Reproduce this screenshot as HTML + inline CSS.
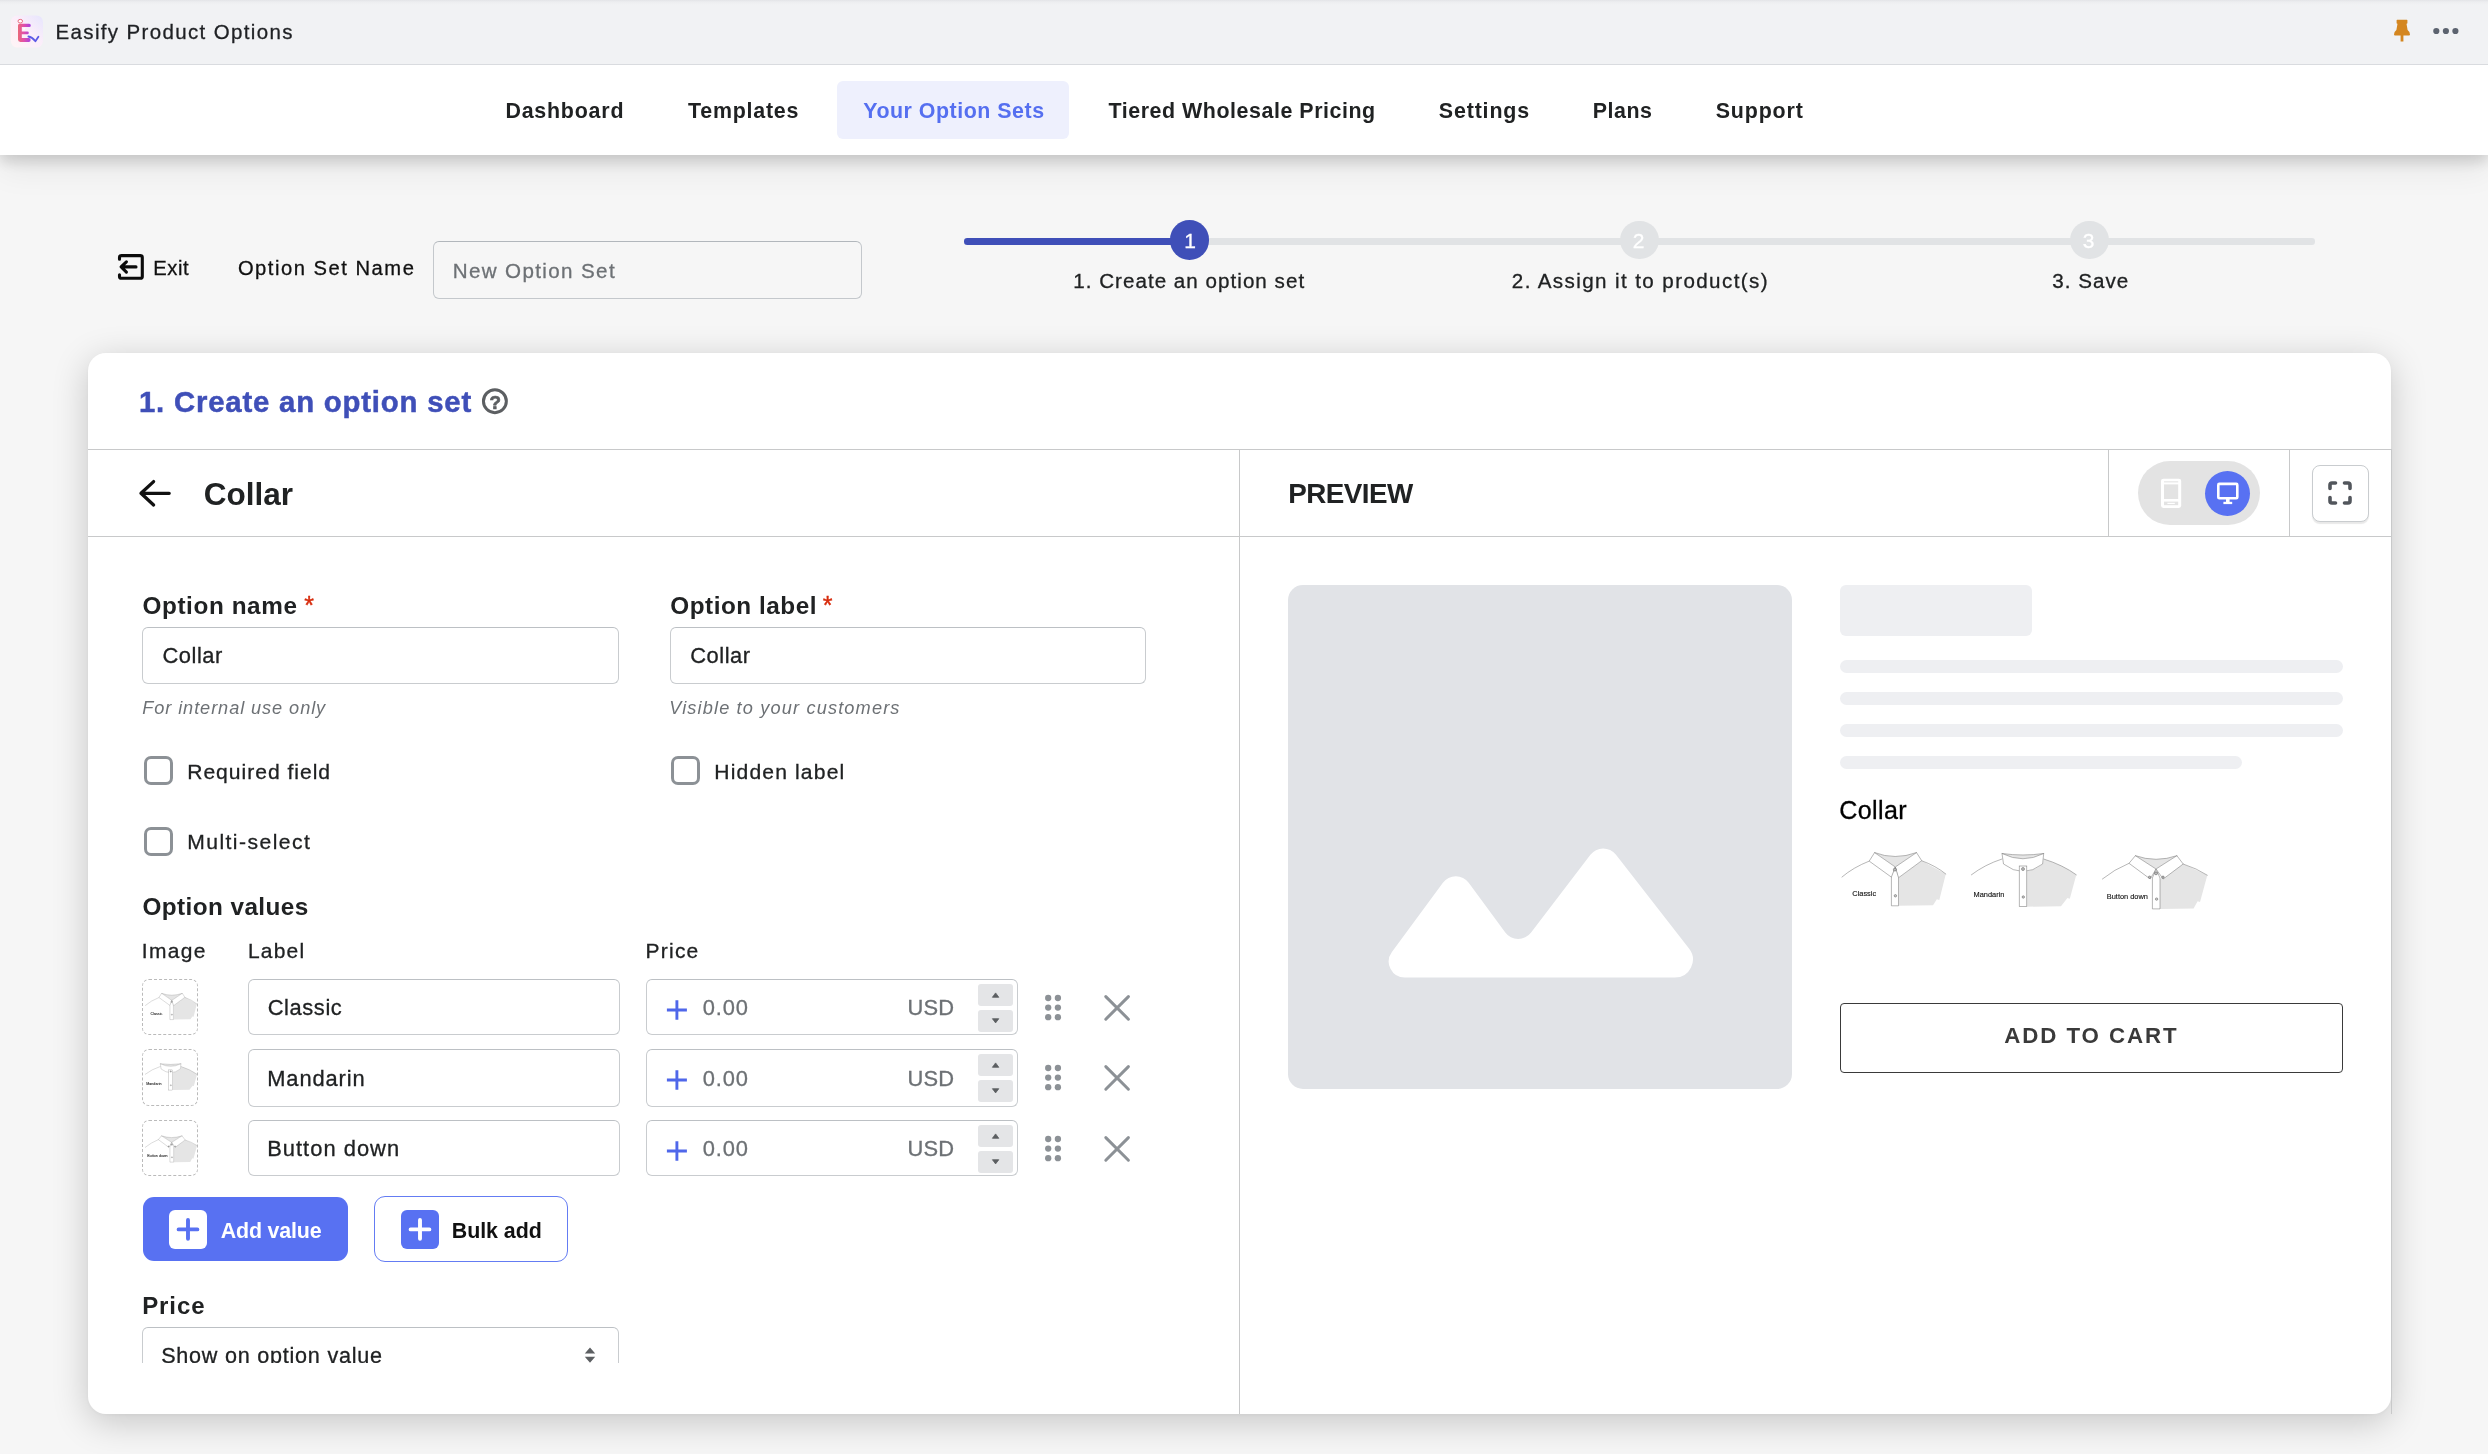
<!DOCTYPE html>
<html lang="en">
<head>
<meta charset="utf-8">
<title>Easify Product Options</title>
<style>
*{box-sizing:border-box}
html,body{margin:0;padding:0}
body{width:2488px;height:1454px;overflow:hidden;background:#f6f6f6;position:relative;font-family:"Liberation Sans",sans-serif}
.a{position:absolute}
.t{position:absolute;white-space:nowrap;line-height:1;font-family:"Liberation Sans",sans-serif}
#topbar{left:0;top:0;width:2488px;height:65px;background:linear-gradient(#e3e4e7 0,#edeef0 2px,#f1f2f4 5px);border-bottom:1px solid #d9dbdf}
#nav{left:0;top:65px;width:2488px;height:90px;background:#fff;box-shadow:0 6px 14px rgba(0,0,0,.16),0 14px 34px rgba(0,0,0,.07);clip-path:inset(0 0 -80px 0)}
#pill{left:837px;top:81px;width:232px;height:58px;border-radius:6px;background:#eef0fd}
#card{left:88px;top:353px;width:2303px;height:1061px;border-radius:18px;background:#fff;box-shadow:0 8px 36px rgba(0,0,0,.2),0 1px 4px rgba(0,0,0,.04)}
.hl{height:1px;background:#c8c9ca}
.vl{width:1px;background:#c8c9ca}
.inp{border:1px solid #c9cccf;border-top-color:#bcc0c4;border-radius:6px;background:#fff}
.cb{width:28.5px;height:28.5px;border:3px solid #8c9196;border-radius:7px;background:#fff}
.thumb{width:55.5px;height:55.5px;border:1px dashed #bababa;border-radius:7px;background:#fff}
.spin{left:978px;width:35px;background:#e4e5e7;border-radius:3px}
.sk{background:#eeeff2}
</style>
</head>
<body>
<div id="root" class="a" style="left:0;top:0;width:2488px;height:1454px;will-change:transform">
<!-- top bar -->
<div id="topbar" class="a"></div>
<svg class="a" style="left:10px;top:14px" width="34" height="35" viewBox="10 14 34 35">
  <defs>
    <linearGradient id="lg1" x1="0" y1="1" x2="1" y2="0"><stop offset="0" stop-color="#fff4f5"/><stop offset=".55" stop-color="#fbeefa"/><stop offset="1" stop-color="#e6e5fd"/></linearGradient>
    <linearGradient id="lg2" x1="0" y1="0" x2="1" y2="0"><stop offset="0" stop-color="#ea6878"/><stop offset=".45" stop-color="#e24fa8"/><stop offset="1" stop-color="#a542e4"/></linearGradient>
  </defs>
  <rect x="10.8" y="15.4" width="32.2" height="32.2" rx="6.5" fill="url(#lg1)"/>
  <path d="M18 25.4 Q18 23.8 19.6 23.8 L29.2 23.8 Q30.8 23.8 30.8 25.4 Q30.8 27 29.2 27 L21.8 27 L21.8 31.4 L27.4 31.4 Q28.8 31.4 28.8 32.8 Q28.8 34.3 27.4 34.3 L21.8 34.3 L21.8 38 L28.8 38 Q30.6 38 30.6 40 Q30.6 42 28.8 42 L20.4 42 Q18 42 18 39.6 Z" fill="url(#lg2)"/>
  <ellipse cx="20.3" cy="21.2" rx="2.3" ry="1.8" fill="#fff" stroke="#ea6a80" stroke-width="1"/>
  <path d="M22.5 28.6 L25.8 27.4 L24 30.6 Z" fill="#fff" opacity=".85"/>
  <path d="M28.4 36.5 Q32 37 35.4 41.2 L38.4 36.8" fill="none" stroke="#5d5ae6" stroke-width="1.8" stroke-linecap="round" stroke-linejoin="round"/>
</svg>
<svg class="a" style="left:2392px;top:18px" width="20" height="26" viewBox="0 0 20 26">
  <path d="M4.6 2.3 Q4.6 1.8 5.2 1.8 L14.8 1.8 Q15.4 1.8 15.4 2.3 L15.4 5 Q15.4 5.6 14.8 5.7 L14.5 5.8 L15.6 12 Q18 13.6 18 16.6 Q18 17.6 17 17.6 L11.4 17.6 L11.4 23.4 L8.6 23.4 L8.6 17.6 L3 17.6 Q2 17.6 2 16.6 Q2 13.6 4.4 12 L5.5 5.8 L5.2 5.7 Q4.6 5.6 4.6 5 Z" fill="#d4861f"/>
</svg>
<svg class="a" style="left:2430px;top:26px" width="32" height="10" viewBox="0 0 32 10"><circle cx="6.3" cy="5" r="3.1" fill="#5c636f"/><circle cx="15.9" cy="5" r="3.1" fill="#5c636f"/><circle cx="25.4" cy="5" r="3.1" fill="#5c636f"/></svg>

<!-- nav -->
<div id="nav" class="a"></div>
<div id="pill" class="a"></div>

<!-- exit row -->
<svg class="a" style="left:114px;top:250px" width="34" height="34" viewBox="114 250 34 34" fill="none" stroke="#0b0b0b" stroke-width="3.1" stroke-linecap="round" stroke-linejoin="round">
  <path d="M119.5 259.3 L119.5 257.5 Q119.5 255.6 121.4 255.6 L140.4 255.6 Q142.3 255.6 142.3 257.5 L142.3 276.4 Q142.3 278.3 140.4 278.3 L121.4 278.3 Q119.5 278.3 119.5 276.4 L119.5 274.7"/>
  <path d="M136 266.9 L121.3 266.9 M126.4 261.8 L121.1 266.9 L126.4 272.1"/>
</svg>
<div class="a inp" style="left:433px;top:241px;width:429px;height:57.5px;background:#f6f6f6;border-color:#c4c8cc;border-top-color:#b2b7bc"></div>

<!-- stepper -->
<div class="a" style="left:1189px;top:238.3px;width:1126px;height:6.4px;border-radius:3.2px;background:#e1e3e5"></div>
<div class="a" style="left:964px;top:238px;width:226px;height:6.6px;border-radius:3.3px;background:#3f4fb8"></div>
<div class="a" style="left:1169.7px;top:220.4px;width:39.4px;height:39.4px;border-radius:50%;background:#3f4fb8"></div>
<div class="a" style="left:1620.3px;top:220.6px;width:38.8px;height:38.8px;border-radius:50%;background:#e1e3e5"></div>
<div class="a" style="left:2070.3px;top:220.6px;width:38.8px;height:38.8px;border-radius:50%;background:#e1e3e5"></div>

<!-- card -->
<div id="card" class="a"></div>
<div class="a hl" style="left:88px;top:449px;width:2304px"></div>
<div class="a hl" style="left:88px;top:536px;width:2304px"></div>
<div class="a vl" style="left:1239px;top:449px;height:965px"></div>
<div class="a vl" style="left:2108px;top:449px;height:88px"></div>
<div class="a vl" style="left:2289px;top:449px;height:88px"></div>
<div class="a vl" style="left:2391px;top:449px;height:965px"></div>

<!-- help icon -->
<svg class="a" style="left:480px;top:386px" width="30" height="30" viewBox="480 386 30 30"><circle cx="494.9" cy="401.2" r="11.45" fill="none" stroke="#5c5f62" stroke-width="3"/></svg>
<!-- back arrow -->
<svg class="a" style="left:134px;top:476px" width="42" height="36" viewBox="134 476 42 36" fill="none" stroke="#111" stroke-width="3.3" stroke-linecap="round" stroke-linejoin="round">
  <path d="M169.2 493.3 L141.3 493.3 M153.6 481.6 L141 493.3 L153.6 505"/>
</svg>

<!-- preview toggle -->
<div class="a" style="left:2138px;top:461.2px;width:122px;height:64px;border-radius:32px;background:#e3e3e3"></div>
<div class="a" style="left:2205px;top:471.2px;width:45px;height:45px;border-radius:50%;background:#5871f2"></div>
<svg class="a" style="left:2158px;top:476px" width="26" height="34" viewBox="2158 476 26 34">
  <rect x="2161" y="478.7" width="20.2" height="29.2" rx="2.4" fill="#fff"/>
  <rect x="2164" y="484.4" width="14.2" height="14.6" fill="#e3e3e3"/>
  <rect x="2164" y="481.3" width="14.2" height="1.1" fill="#e3e3e3"/>
  <rect x="2164" y="501.6" width="14.2" height="3.6" fill="#e3e3e3"/>
  <rect x="2167.4" y="502.8" width="7.4" height="1.2" fill="#fff"/>
</svg>
<svg class="a" style="left:2214px;top:480px" width="28" height="28" viewBox="2214 480 28 28">
  <rect x="2218.3" y="483.9" width="19" height="14.4" rx="1" fill="none" stroke="#fff" stroke-width="2.6"/>
  <rect x="2226" y="499" width="3.6" height="3.4" fill="#fff"/>
  <rect x="2223.4" y="501.8" width="8.8" height="2.3" fill="#fff"/>
</svg>
<div class="a" style="left:2312.3px;top:464.6px;width:56.4px;height:57px;border-radius:8px;border:1.3px solid #c9cccf;background:#fff;box-shadow:0 1.5px 1px rgba(0,0,0,.09)"></div>
<svg class="a" style="left:2324px;top:477px" width="32" height="32" viewBox="2324 477 32 32" fill="none" stroke="#52565c" stroke-width="3.6" stroke-linecap="round" stroke-linejoin="round">
  <path d="M2330 488.5 L2330 485 Q2330 483 2332 483 L2335.5 483 M2344.5 483 L2348 483 Q2350 483 2350 485 L2350 488.5 M2350 497.5 L2350 501 Q2350 503 2348 503 L2344.5 503 M2335.5 503 L2332 503 Q2330 503 2330 501 L2330 497.5"/>
</svg>

<!-- LEFT FORM -->
<div class="a inp" style="left:142px;top:627px;width:477px;height:56.8px"></div>
<div class="a inp" style="left:670px;top:627px;width:476px;height:56.8px"></div>
<span class="t" style="left:304.2px;top:593.4px;font-size:25px;font-weight:400;color:#d72c0d;-webkit-text-stroke:0.4px">*</span>
<span class="t" style="left:822.7px;top:593.4px;font-size:25px;font-weight:400;color:#d72c0d;-webkit-text-stroke:0.4px">*</span>
<div class="a cb" style="left:144.2px;top:756.1px"></div>
<div class="a cb" style="left:671.3px;top:756.1px"></div>
<div class="a cb" style="left:144.2px;top:827.3px"></div>

<div class="a thumb" style="left:142.3px;top:979.2px;height:55.5px"></div>
<svg class="a" style="left:144.5px;top:993.2px" width="52.4" height="28.7" viewBox="0 0 106 58"><path d="M57.5 26 L80.7 8.7 L104.8 22 L98.3 48 L95.8 47.3 L92 53.2 L57.5 53.8 Z" fill="#e5e5e5"/>
<path d="M33.6 0.6 Q54 8.5 75.5 0.6 L54.3 15 Z" fill="#e5e5e5"/>
<path d="M1 25 Q12 15.5 28.2 9.1" fill="none" stroke="#7a7a7a" stroke-width="0.55" stroke-linejoin="round" stroke-linecap="round"/>
<path d="M80.7 8.7 Q95 14 104.8 22" fill="none" stroke="#7a7a7a" stroke-width="0.55" stroke-linejoin="round" stroke-linecap="round"/>
<path d="M33.6 0.6 L28.2 9.1 L51 25.6 L54.3 15 Z" fill="#fff" stroke="#7a7a7a" stroke-width="0.55" stroke-linejoin="round"/>
<path d="M75.5 0.6 L80.7 8.7 L57.2 26 L54.3 15 Z" fill="#fff" stroke="#7a7a7a" stroke-width="0.55" stroke-linejoin="round"/>
<path d="M33.6 0.6 Q54 8.5 75.5 0.6" fill="none" stroke="#7a7a7a" stroke-width="0.55" stroke-linejoin="round" stroke-linecap="round"/>
<path d="M50.4 25 L50.4 53.8 L57.5 53.8 L57.5 25.6 L54.3 15 Z" fill="#fff" stroke="#7a7a7a" stroke-width="0.55" stroke-linejoin="round"/>
<circle cx="53.9" cy="17.6" r="1.5" fill="#bbb" stroke="#555" stroke-width="0.5"/>
<circle cx="54.4" cy="43.8" r="1.2" fill="#ccc" stroke="#555" stroke-width="0.5"/>
<text x="11.3" y="43.9" font-size="7.4" font-family="Liberation Sans, sans-serif" fill="#111" stroke="#111" stroke-width="0.12">Classic</text></svg>
<div class="a inp" style="left:248.3px;top:979.2px;width:371.4px;height:56.3px"></div>
<div class="a inp" style="left:646.2px;top:979.2px;width:371.6px;height:56.3px"></div>
<svg class="a" style="left:664px;top:997.0px" width="26" height="26" viewBox="0 0 26 26" fill="none" stroke="#4f67ea" stroke-width="2.9"><path d="M2.9 13 L22.9 13 M12.9 3.3 L12.9 22.7"/></svg>
<div class="a spin" style="top:983.8px;height:22px"></div>
<div class="a spin" style="top:1010.1px;height:21.9px"></div>
<svg class="a" style="left:990px;top:991.2px" width="12" height="34" viewBox="0 0 12 34"><path d="M2.4 6.3 L5.6 1.9 L8.8 6.3 Z M2.4 27.7 L5.6 31.9 L8.8 27.7 Z" fill="#5c5f62" stroke="#5c5f62" stroke-width="0.8" stroke-linejoin="round"/></svg>
<svg class="a" style="left:1044px;top:994.3px" width="18" height="28" viewBox="0 0 18 28" fill="#8c9196"><circle cx="4.2" cy="4" r="3.15"/><circle cx="4.2" cy="13.6" r="3.15"/><circle cx="4.2" cy="23.2" r="3.15"/><circle cx="13.9" cy="4" r="3.15"/><circle cx="13.9" cy="13.6" r="3.15"/><circle cx="13.9" cy="23.2" r="3.15"/></svg>
<svg class="a" style="left:1102px;top:993.2px" width="30" height="30" viewBox="0 0 30 30" fill="none" stroke="#8c9196" stroke-width="3" stroke-linecap="round"><path d="M3.8 3.6 L26.4 26.2 M26.4 3.6 L3.8 26.2"/></svg>
<div class="a thumb" style="left:142.3px;top:1049.1px;height:57.2px"></div>
<svg class="a" style="left:144.5px;top:1063.1px" width="52.4" height="28.7" viewBox="0 0 106 58"><path d="M55.8 19 Q64 18 71.6 12 L72.7 7 Q92 13 105.3 22.8 L98.8 46.7 L96.4 46 L90 54.3 L55.8 54.7 Z" fill="#e5e5e5"/>
<path d="M31 1.5 Q52 4.5 72.7 1.5 Q52 12 31 1.5 Z" fill="#e5e5e5"/>
<path d="M0.4 22.8 Q14 12.5 31 7" fill="none" stroke="#7a7a7a" stroke-width="0.55" stroke-linejoin="round" stroke-linecap="round"/>
<path d="M72.7 7 Q92 13 105.3 22.8" fill="none" stroke="#7a7a7a" stroke-width="0.55" stroke-linejoin="round" stroke-linecap="round"/>
<path d="M31 1.5 Q52 12 72.7 1.5 L71.6 12 Q52 27 32.5 12 Z" fill="#fff" stroke="#7a7a7a" stroke-width="0.55" stroke-linejoin="round"/>
<path d="M31 1.5 Q52 4.5 72.7 1.5" fill="none" stroke="#7a7a7a" stroke-width="0.55" stroke-linejoin="round" stroke-linecap="round"/>
<rect x="48.2" y="14" width="7.6" height="40.7" fill="#fff" stroke="#7a7a7a" stroke-width="0.55"/>
<circle cx="52" cy="17" r="1.5" fill="#bbb" stroke="#555" stroke-width="0.5"/>
<circle cx="52.3" cy="45" r="1.2" fill="#ccc" stroke="#555" stroke-width="0.5"/>
<text x="2.6" y="44.5" font-size="7.4" font-family="Liberation Sans, sans-serif" fill="#111" stroke="#111" stroke-width="0.12">Mandarin</text></svg>
<div class="a inp" style="left:248.3px;top:1049.1px;width:371.4px;height:58px"></div>
<div class="a inp" style="left:646.2px;top:1049.1px;width:371.6px;height:58px"></div>
<svg class="a" style="left:664px;top:1066.9px" width="26" height="26" viewBox="0 0 26 26" fill="none" stroke="#4f67ea" stroke-width="2.9"><path d="M2.9 13 L22.9 13 M12.9 3.3 L12.9 22.7"/></svg>
<div class="a spin" style="top:1053.7px;height:22px"></div>
<div class="a spin" style="top:1080.0px;height:21.9px"></div>
<svg class="a" style="left:990px;top:1061.1px" width="12" height="34" viewBox="0 0 12 34"><path d="M2.4 6.3 L5.6 1.9 L8.8 6.3 Z M2.4 27.7 L5.6 31.9 L8.8 27.7 Z" fill="#5c5f62" stroke="#5c5f62" stroke-width="0.8" stroke-linejoin="round"/></svg>
<svg class="a" style="left:1044px;top:1064.2px" width="18" height="28" viewBox="0 0 18 28" fill="#8c9196"><circle cx="4.2" cy="4" r="3.15"/><circle cx="4.2" cy="13.6" r="3.15"/><circle cx="4.2" cy="23.2" r="3.15"/><circle cx="13.9" cy="4" r="3.15"/><circle cx="13.9" cy="13.6" r="3.15"/><circle cx="13.9" cy="23.2" r="3.15"/></svg>
<svg class="a" style="left:1102px;top:1063.1px" width="30" height="30" viewBox="0 0 30 30" fill="none" stroke="#8c9196" stroke-width="3" stroke-linecap="round"><path d="M3.8 3.6 L26.4 26.2 M26.4 3.6 L3.8 26.2"/></svg>
<div class="a thumb" style="left:142.3px;top:1120.1px;height:55.6px"></div>
<svg class="a" style="left:144.5px;top:1134.1px" width="52.4" height="28.7" viewBox="0 0 106 58"><path d="M58 27 L81.2 12 L105.3 23.2 L98 50 L95.6 49.2 L91.6 56.4 L58 56.9 Z" fill="#e5e5e5"/>
<path d="M33.4 3.7 Q54 11 74.9 3.7 L54 17 Z" fill="#e5e5e5"/>
<path d="M0.4 27 Q12 17.5 27 11.3" fill="none" stroke="#7a7a7a" stroke-width="0.55" stroke-linejoin="round" stroke-linecap="round"/>
<path d="M81.2 12 Q95 16.5 105.3 23.2" fill="none" stroke="#7a7a7a" stroke-width="0.55" stroke-linejoin="round" stroke-linecap="round"/>
<path d="M33.4 3.7 L27 11.3 L48.2 27 L54 17 Z" fill="#fff" stroke="#7a7a7a" stroke-width="0.55" stroke-linejoin="round"/>
<path d="M74.9 3.7 L81.2 12 L61.2 27 L54 17 Z" fill="#fff" stroke="#7a7a7a" stroke-width="0.55" stroke-linejoin="round"/>
<path d="M33.4 3.7 Q54 11 74.9 3.7" fill="none" stroke="#7a7a7a" stroke-width="0.55" stroke-linejoin="round" stroke-linecap="round"/>
<path d="M50.4 26 L50.4 56.9 L58 56.9 L58 26 L54 17 Z" fill="#fff" stroke="#7a7a7a" stroke-width="0.55" stroke-linejoin="round"/>
<circle cx="54" cy="21.3" r="1.5" fill="#bbb" stroke="#555" stroke-width="0.5"/>
<circle cx="47.6" cy="25.2" r="1.2" fill="#bbb" stroke="#555" stroke-width="0.5"/>
<circle cx="61" cy="25.2" r="1.2" fill="#bbb" stroke="#555" stroke-width="0.5"/>
<circle cx="54.6" cy="47.1" r="1.2" fill="#ccc" stroke="#555" stroke-width="0.5"/>
<text x="4.8" y="46.7" font-size="7.4" font-family="Liberation Sans, sans-serif" fill="#111" stroke="#111" stroke-width="0.12">Button down</text></svg>
<div class="a inp" style="left:248.3px;top:1120.1px;width:371.4px;height:56.4px"></div>
<div class="a inp" style="left:646.2px;top:1120.1px;width:371.6px;height:56.4px"></div>
<svg class="a" style="left:664px;top:1137.9px" width="26" height="26" viewBox="0 0 26 26" fill="none" stroke="#4f67ea" stroke-width="2.9"><path d="M2.9 13 L22.9 13 M12.9 3.3 L12.9 22.7"/></svg>
<div class="a spin" style="top:1124.7px;height:22px"></div>
<div class="a spin" style="top:1151.0px;height:21.9px"></div>
<svg class="a" style="left:990px;top:1132.1px" width="12" height="34" viewBox="0 0 12 34"><path d="M2.4 6.3 L5.6 1.9 L8.8 6.3 Z M2.4 27.7 L5.6 31.9 L8.8 27.7 Z" fill="#5c5f62" stroke="#5c5f62" stroke-width="0.8" stroke-linejoin="round"/></svg>
<svg class="a" style="left:1044px;top:1135.2px" width="18" height="28" viewBox="0 0 18 28" fill="#8c9196"><circle cx="4.2" cy="4" r="3.15"/><circle cx="4.2" cy="13.6" r="3.15"/><circle cx="4.2" cy="23.2" r="3.15"/><circle cx="13.9" cy="4" r="3.15"/><circle cx="13.9" cy="13.6" r="3.15"/><circle cx="13.9" cy="23.2" r="3.15"/></svg>
<svg class="a" style="left:1102px;top:1134.1px" width="30" height="30" viewBox="0 0 30 30" fill="none" stroke="#8c9196" stroke-width="3" stroke-linecap="round"><path d="M3.8 3.6 L26.4 26.2 M26.4 3.6 L3.8 26.2"/></svg>

<!-- buttons -->
<div class="a" style="left:142.5px;top:1196.6px;width:205px;height:64.8px;border-radius:11px;background:#5871f2"></div>
<div class="a" style="left:168.8px;top:1210.1px;width:38.2px;height:38.8px;border-radius:6px;background:#fff"></div>
<svg class="a" style="left:168.8px;top:1210.1px" width="38.2" height="38.8" viewBox="0 0 38.2 38.8" fill="none" stroke="#5871f2" stroke-width="3.9" stroke-linecap="round"><path d="M9.6 19.4 L28.4 19.4 M19 10 L19 28.8"/></svg>
<div class="a" style="left:373.8px;top:1196px;width:194.3px;height:65.8px;border-radius:11px;background:#fff;border:1px solid #647cf3"></div>
<div class="a" style="left:400.7px;top:1210.1px;width:38.2px;height:38.8px;border-radius:6px;background:#5871f2"></div>
<svg class="a" style="left:400.7px;top:1210.1px" width="38.2" height="38.8" viewBox="0 0 38.2 38.8" fill="none" stroke="#fff" stroke-width="3.9" stroke-linecap="round"><path d="M9.6 19.4 L28.4 19.4 M19 10 L19 28.8"/></svg>

<!-- select (clipped) -->
<div class="a" style="left:140px;top:1320px;width:482px;height:43px;overflow:hidden">
  <div class="a inp" style="left:2px;top:6.5px;width:477px;height:57px"></div>
  <svg class="a" style="left:443px;top:26px" width="14" height="18" viewBox="0 0 14 18"><path d="M1.8 7.4 L7 1.4 L12.2 7.4 Z M1.8 10.8 L7 16.8 L12.2 10.8 Z" fill="#5c5f62"/></svg>
  <div class="a" style="left:-140px;top:-1320px;width:0;height:0"><span class="t" style="left:161.2px;top:1344.6px;font-size:21.58px;font-weight:400;color:#202223;font-style:normal;letter-spacing:0.763px;-webkit-text-stroke:0.30px;">Show on option value</span></div>
</div>

<!-- PREVIEW -->
<div class="a" style="left:1288px;top:585px;width:504px;height:504px;border-radius:15px;background:#e1e3e7"></div>
<svg class="a" style="left:1380px;top:840px" width="320" height="145" viewBox="1380 840 320 145">
  <path d="M1404.8 977.6 A16 16 0 0 1 1391.9 952.1 L1442.9 882.8 A16 16 0 0 1 1468.7 882.8 L1505.3 932.4 A16 16 0 0 0 1530.9 932.7 L1590.4 854.8 A16 16 0 0 1 1615.8 854.6 L1689.0 948.5 A18 18 0 0 1 1674.8 977.6 Z" fill="#fff"/>
</svg>
<div class="a sk" style="left:1840px;top:585px;width:192px;height:50.5px;border-radius:6px"></div>
<div class="a sk" style="left:1840px;top:660px;width:503px;height:13px;border-radius:6.5px"></div>
<div class="a sk" style="left:1840px;top:692px;width:503px;height:13px;border-radius:6.5px"></div>
<div class="a sk" style="left:1840px;top:724px;width:503px;height:13px;border-radius:6.5px"></div>
<div class="a sk" style="left:1840px;top:756px;width:402px;height:13px;border-radius:6.5px"></div>
<svg class="a" style="left:1840.6px;top:851.6px" width="106" height="58" viewBox="0 0 106 58"><path d="M57.5 26 L80.7 8.7 L104.8 22 L98.3 48 L95.8 47.3 L92 53.2 L57.5 53.8 Z" fill="#e5e5e5"/>
<path d="M33.6 0.6 Q54 8.5 75.5 0.6 L54.3 15 Z" fill="#e5e5e5"/>
<path d="M1 25 Q12 15.5 28.2 9.1" fill="none" stroke="#7a7a7a" stroke-width="0.55" stroke-linejoin="round" stroke-linecap="round"/>
<path d="M80.7 8.7 Q95 14 104.8 22" fill="none" stroke="#7a7a7a" stroke-width="0.55" stroke-linejoin="round" stroke-linecap="round"/>
<path d="M33.6 0.6 L28.2 9.1 L51 25.6 L54.3 15 Z" fill="#fff" stroke="#7a7a7a" stroke-width="0.55" stroke-linejoin="round"/>
<path d="M75.5 0.6 L80.7 8.7 L57.2 26 L54.3 15 Z" fill="#fff" stroke="#7a7a7a" stroke-width="0.55" stroke-linejoin="round"/>
<path d="M33.6 0.6 Q54 8.5 75.5 0.6" fill="none" stroke="#7a7a7a" stroke-width="0.55" stroke-linejoin="round" stroke-linecap="round"/>
<path d="M50.4 25 L50.4 53.8 L57.5 53.8 L57.5 25.6 L54.3 15 Z" fill="#fff" stroke="#7a7a7a" stroke-width="0.55" stroke-linejoin="round"/>
<circle cx="53.9" cy="17.6" r="1.5" fill="#bbb" stroke="#555" stroke-width="0.5"/>
<circle cx="54.4" cy="43.8" r="1.2" fill="#ccc" stroke="#555" stroke-width="0.5"/>
<text x="11.3" y="43.9" font-size="7.4" font-family="Liberation Sans, sans-serif" fill="#111" stroke="#111" stroke-width="0.12">Classic</text></svg>
<svg class="a" style="left:1970.9px;top:851.6px" width="106" height="58" viewBox="0 0 106 58"><path d="M55.8 19 Q64 18 71.6 12 L72.7 7 Q92 13 105.3 22.8 L98.8 46.7 L96.4 46 L90 54.3 L55.8 54.7 Z" fill="#e5e5e5"/>
<path d="M31 1.5 Q52 4.5 72.7 1.5 Q52 12 31 1.5 Z" fill="#e5e5e5"/>
<path d="M0.4 22.8 Q14 12.5 31 7" fill="none" stroke="#7a7a7a" stroke-width="0.55" stroke-linejoin="round" stroke-linecap="round"/>
<path d="M72.7 7 Q92 13 105.3 22.8" fill="none" stroke="#7a7a7a" stroke-width="0.55" stroke-linejoin="round" stroke-linecap="round"/>
<path d="M31 1.5 Q52 12 72.7 1.5 L71.6 12 Q52 27 32.5 12 Z" fill="#fff" stroke="#7a7a7a" stroke-width="0.55" stroke-linejoin="round"/>
<path d="M31 1.5 Q52 4.5 72.7 1.5" fill="none" stroke="#7a7a7a" stroke-width="0.55" stroke-linejoin="round" stroke-linecap="round"/>
<rect x="48.2" y="14" width="7.6" height="40.7" fill="#fff" stroke="#7a7a7a" stroke-width="0.55"/>
<circle cx="52" cy="17" r="1.5" fill="#bbb" stroke="#555" stroke-width="0.5"/>
<circle cx="52.3" cy="45" r="1.2" fill="#ccc" stroke="#555" stroke-width="0.5"/>
<text x="2.6" y="44.5" font-size="7.4" font-family="Liberation Sans, sans-serif" fill="#111" stroke="#111" stroke-width="0.12">Mandarin</text></svg>
<svg class="a" style="left:2101.7px;top:851.6px" width="106" height="58" viewBox="0 0 106 58"><path d="M58 27 L81.2 12 L105.3 23.2 L98 50 L95.6 49.2 L91.6 56.4 L58 56.9 Z" fill="#e5e5e5"/>
<path d="M33.4 3.7 Q54 11 74.9 3.7 L54 17 Z" fill="#e5e5e5"/>
<path d="M0.4 27 Q12 17.5 27 11.3" fill="none" stroke="#7a7a7a" stroke-width="0.55" stroke-linejoin="round" stroke-linecap="round"/>
<path d="M81.2 12 Q95 16.5 105.3 23.2" fill="none" stroke="#7a7a7a" stroke-width="0.55" stroke-linejoin="round" stroke-linecap="round"/>
<path d="M33.4 3.7 L27 11.3 L48.2 27 L54 17 Z" fill="#fff" stroke="#7a7a7a" stroke-width="0.55" stroke-linejoin="round"/>
<path d="M74.9 3.7 L81.2 12 L61.2 27 L54 17 Z" fill="#fff" stroke="#7a7a7a" stroke-width="0.55" stroke-linejoin="round"/>
<path d="M33.4 3.7 Q54 11 74.9 3.7" fill="none" stroke="#7a7a7a" stroke-width="0.55" stroke-linejoin="round" stroke-linecap="round"/>
<path d="M50.4 26 L50.4 56.9 L58 56.9 L58 26 L54 17 Z" fill="#fff" stroke="#7a7a7a" stroke-width="0.55" stroke-linejoin="round"/>
<circle cx="54" cy="21.3" r="1.5" fill="#bbb" stroke="#555" stroke-width="0.5"/>
<circle cx="47.6" cy="25.2" r="1.2" fill="#bbb" stroke="#555" stroke-width="0.5"/>
<circle cx="61" cy="25.2" r="1.2" fill="#bbb" stroke="#555" stroke-width="0.5"/>
<circle cx="54.6" cy="47.1" r="1.2" fill="#ccc" stroke="#555" stroke-width="0.5"/>
<text x="4.8" y="46.7" font-size="7.4" font-family="Liberation Sans, sans-serif" fill="#111" stroke="#111" stroke-width="0.12">Button down</text></svg>
<div class="a" style="left:1840px;top:1003px;width:503px;height:70px;border:1.6px solid #3a3a3a;border-radius:4px;background:#fff"></div>

<div id="txt" class="a" style="left:0;top:0;width:2488px;height:1454px">
<span class="t" style="left:55.5px;top:21.6px;font-size:20.48px;font-weight:400;color:#1f2124;font-style:normal;letter-spacing:1.371px;-webkit-text-stroke:0.30px;">Easify Product Options</span>
<span class="t" style="left:505.4px;top:100.8px;font-size:21.40px;font-weight:700;color:#202223;font-style:normal;letter-spacing:0.794px;">Dashboard</span>
<span class="t" style="left:688.1px;top:100.8px;font-size:21.40px;font-weight:700;color:#202223;font-style:normal;letter-spacing:0.762px;">Templates</span>
<span class="t" style="left:863.2px;top:100.8px;font-size:21.40px;font-weight:700;color:#556ff0;font-style:normal;letter-spacing:0.517px;">Your Option Sets</span>
<span class="t" style="left:1108.5px;top:100.8px;font-size:21.40px;font-weight:700;color:#202223;font-style:normal;letter-spacing:0.552px;">Tiered Wholesale Pricing</span>
<span class="t" style="left:1438.8px;top:100.8px;font-size:21.40px;font-weight:700;color:#202223;font-style:normal;letter-spacing:0.850px;">Settings</span>
<span class="t" style="left:1592.8px;top:100.8px;font-size:21.40px;font-weight:700;color:#202223;font-style:normal;letter-spacing:0.500px;">Plans</span>
<span class="t" style="left:1715.7px;top:100.8px;font-size:21.40px;font-weight:700;color:#202223;font-style:normal;letter-spacing:0.867px;">Support</span>
<span class="t" style="left:153.2px;top:257.7px;font-size:20.18px;font-weight:400;color:#111;font-style:normal;letter-spacing:0.583px;-webkit-text-stroke:0.30px;">Exit</span>
<span class="t" style="left:237.9px;top:257.5px;font-size:20.18px;font-weight:400;color:#111;font-style:normal;letter-spacing:1.518px;-webkit-text-stroke:0.30px;">Option Set Name</span>
<span class="t" style="left:452.7px;top:260.9px;font-size:20.58px;font-weight:400;color:#6d7175;font-style:normal;letter-spacing:1.373px;-webkit-text-stroke:0.30px;">New Option Set</span>
<span class="t" style="left:1184.3px;top:229.8px;font-size:20.98px;font-weight:400;color:#fff;font-style:normal;letter-spacing:0.000px;-webkit-text-stroke:0.30px;">1</span>
<span class="t" style="left:1632.8px;top:229.8px;font-size:20.98px;font-weight:400;color:#fff;font-style:normal;letter-spacing:0.000px;-webkit-text-stroke:0.30px;">2</span>
<span class="t" style="left:2082.8px;top:229.8px;font-size:20.98px;font-weight:400;color:#fff;font-style:normal;letter-spacing:0.000px;-webkit-text-stroke:0.30px;">3</span>
<span class="t" style="left:1073.2px;top:270.7px;font-size:20.58px;font-weight:400;color:#202223;font-style:normal;letter-spacing:1.032px;-webkit-text-stroke:0.30px;">1. Create an option set</span>
<span class="t" style="left:1511.8px;top:270.7px;font-size:20.58px;font-weight:400;color:#202223;font-style:normal;letter-spacing:1.400px;-webkit-text-stroke:0.30px;">2. Assign it to product(s)</span>
<span class="t" style="left:2052.2px;top:270.7px;font-size:20.58px;font-weight:400;color:#202223;font-style:normal;letter-spacing:1.042px;-webkit-text-stroke:0.30px;">3. Save</span>
<span class="t" style="left:139.0px;top:387.4px;font-size:29.30px;font-weight:700;color:#3f4fb8;font-style:normal;letter-spacing:0.816px;-webkit-text-stroke:0.50px;">1. Create an option set</span>
<span class="t" style="left:489.4px;top:393.7px;font-size:18.80px;font-weight:700;color:#5c5f62;font-style:normal;letter-spacing:0.000px;-webkit-text-stroke:0.7px;">?</span>
<span class="t" style="left:203.8px;top:478.9px;font-size:31.50px;font-weight:700;color:#202223;font-style:normal;letter-spacing:-0.010px;">Collar</span>
<span class="t" style="left:1288.2px;top:479.7px;font-size:27.80px;font-weight:700;color:#202223;font-style:normal;letter-spacing:-0.542px;">PREVIEW</span>
<span class="t" style="left:142.5px;top:593.9px;font-size:24.30px;font-weight:700;color:#202223;font-style:normal;letter-spacing:0.595px;">Option name</span>
<span class="t" style="left:670.2px;top:593.9px;font-size:24.30px;font-weight:700;color:#202223;font-style:normal;letter-spacing:0.541px;">Option label</span>
<span class="t" style="left:162.5px;top:644.6px;font-size:21.88px;font-weight:400;color:#202223;font-style:normal;letter-spacing:0.540px;-webkit-text-stroke:0.30px;">Collar</span>
<span class="t" style="left:690.2px;top:644.6px;font-size:21.88px;font-weight:400;color:#202223;font-style:normal;letter-spacing:0.540px;-webkit-text-stroke:0.30px;">Collar</span>
<span class="t" style="left:142.2px;top:698.8px;font-size:18.20px;font-weight:400;color:#6d7175;font-style:italic;letter-spacing:0.912px;">For internal use only</span>
<span class="t" style="left:669.2px;top:698.8px;font-size:18.20px;font-weight:400;color:#6d7175;font-style:italic;letter-spacing:1.142px;">Visible to your customers</span>
<span class="t" style="left:187.2px;top:760.5px;font-size:21.08px;font-weight:400;color:#202223;font-style:normal;letter-spacing:0.985px;-webkit-text-stroke:0.30px;">Required field</span>
<span class="t" style="left:714.3px;top:760.5px;font-size:21.08px;font-weight:400;color:#202223;font-style:normal;letter-spacing:1.155px;-webkit-text-stroke:0.30px;">Hidden label</span>
<span class="t" style="left:187.2px;top:830.8px;font-size:21.08px;font-weight:400;color:#202223;font-style:normal;letter-spacing:1.459px;-webkit-text-stroke:0.30px;">Multi-select</span>
<span class="t" style="left:142.5px;top:894.5px;font-size:24.30px;font-weight:700;color:#202223;font-style:normal;letter-spacing:0.421px;">Option values</span>
<span class="t" style="left:141.8px;top:939.9px;font-size:20.98px;font-weight:400;color:#202223;font-style:normal;letter-spacing:1.312px;-webkit-text-stroke:0.30px;">Image</span>
<span class="t" style="left:247.9px;top:939.9px;font-size:20.98px;font-weight:400;color:#202223;font-style:normal;letter-spacing:1.213px;-webkit-text-stroke:0.30px;">Label</span>
<span class="t" style="left:645.5px;top:939.9px;font-size:20.98px;font-weight:400;color:#202223;font-style:normal;letter-spacing:1.250px;-webkit-text-stroke:0.30px;">Price</span>
<span class="t" style="left:267.7px;top:997.1px;font-size:21.88px;font-weight:400;color:#202223;font-style:normal;letter-spacing:0.600px;-webkit-text-stroke:0.30px;">Classic</span>
<span class="t" style="left:267.2px;top:1067.5px;font-size:21.88px;font-weight:400;color:#202223;font-style:normal;letter-spacing:0.900px;-webkit-text-stroke:0.30px;">Mandarin</span>
<span class="t" style="left:267.2px;top:1138.0px;font-size:21.88px;font-weight:400;color:#202223;font-style:normal;letter-spacing:1.030px;-webkit-text-stroke:0.30px;">Button down</span>
<span class="t" style="left:702.8px;top:997.1px;font-size:21.88px;font-weight:400;color:#6d7175;font-style:normal;letter-spacing:0.883px;-webkit-text-stroke:0.30px;">0.00</span>
<span class="t" style="left:702.8px;top:1067.5px;font-size:21.88px;font-weight:400;color:#6d7175;font-style:normal;letter-spacing:0.883px;-webkit-text-stroke:0.30px;">0.00</span>
<span class="t" style="left:702.8px;top:1138.0px;font-size:21.88px;font-weight:400;color:#6d7175;font-style:normal;letter-spacing:0.883px;-webkit-text-stroke:0.30px;">0.00</span>
<span class="t" style="left:907.5px;top:997.1px;font-size:21.88px;font-weight:400;color:#6d7175;font-style:normal;letter-spacing:0.175px;-webkit-text-stroke:0.30px;">USD</span>
<span class="t" style="left:907.5px;top:1067.5px;font-size:21.88px;font-weight:400;color:#6d7175;font-style:normal;letter-spacing:0.175px;-webkit-text-stroke:0.30px;">USD</span>
<span class="t" style="left:907.5px;top:1138.0px;font-size:21.88px;font-weight:400;color:#6d7175;font-style:normal;letter-spacing:0.175px;-webkit-text-stroke:0.30px;">USD</span>
<span class="t" style="left:220.7px;top:1221.3px;font-size:21.40px;font-weight:700;color:#fff;font-style:normal;letter-spacing:-0.156px;">Add value</span>
<span class="t" style="left:451.8px;top:1221.3px;font-size:21.40px;font-weight:700;color:#111;font-style:normal;letter-spacing:-0.050px;">Bulk add</span>
<span class="t" style="left:142.2px;top:1293.6px;font-size:24.00px;font-weight:700;color:#202223;font-style:normal;letter-spacing:0.900px;">Price</span>
<span class="t" style="left:1839.2px;top:797.9px;font-size:25.08px;font-weight:400;color:#000;font-style:normal;letter-spacing:0.390px;-webkit-text-stroke:0.30px;">Collar</span>
<span class="t" style="left:2004.2px;top:1025.0px;font-size:22.30px;font-weight:700;color:#3a3a3a;font-style:normal;letter-spacing:1.935px;">ADD TO CART</span>
</div>
</div>
</body>
</html>
